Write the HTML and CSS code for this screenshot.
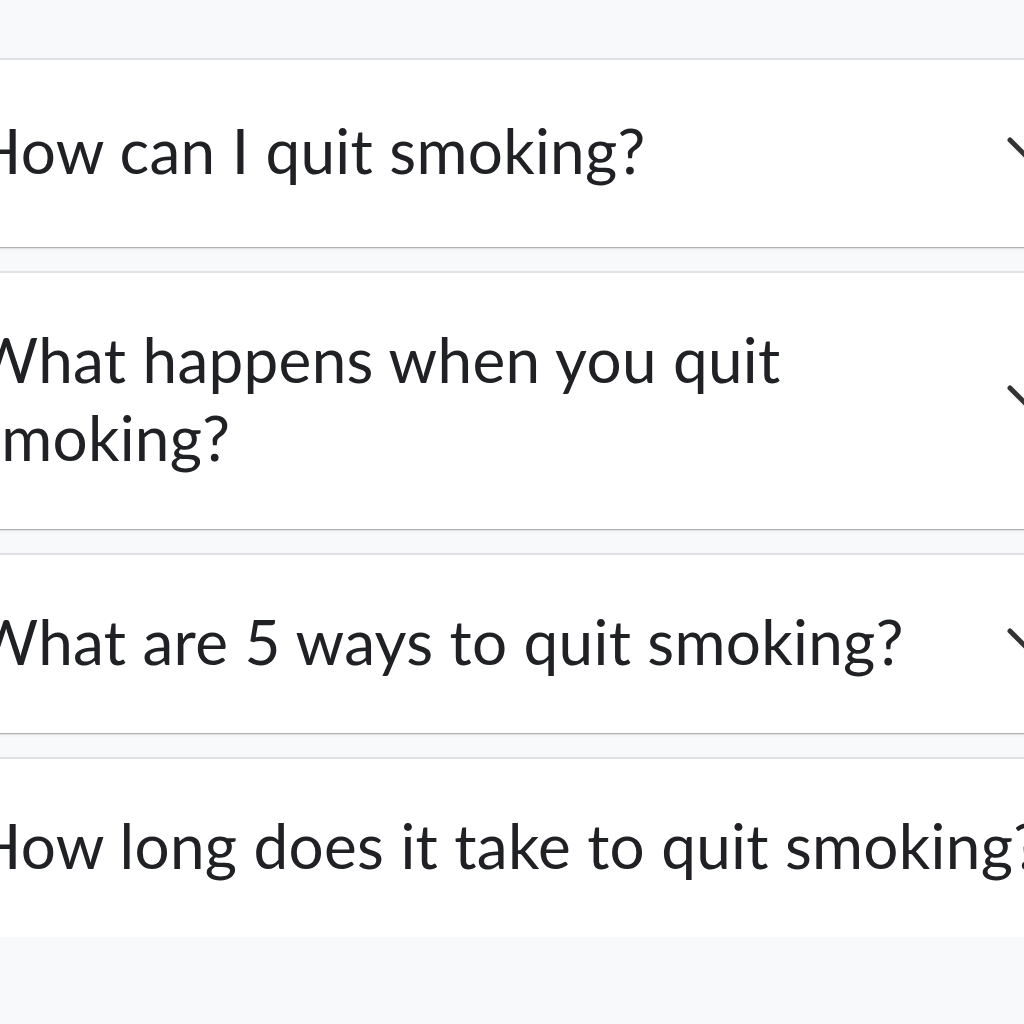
FILE: index.html
```html
<!DOCTYPE html>
<html lang="en">
<head>
  <meta charset="UTF-8" />
  <meta name="viewport" content="width=device-width, initial-scale=1.0"/>
  <title>FAQ</title>
  <link rel="stylesheet" href="styles.css">
</head>
<body>
  <div class="faq">
    <div class="item">
      <span class="question">How can I quit smoking?</span>
      <svg class="chevron" viewBox="0 0 50 50"><path d="M5 15 L25 35 L45 15" /></svg>
    </div>
    <div class="item">
      <span class="question">What happens when you quit<br>smoking?</span>
      <svg class="chevron" viewBox="0 0 50 50"><path d="M5 15 L25 35 L45 15" /></svg>
    </div>
    <div class="item">
      <span class="question">What are 5 ways to quit smoking?</span>
      <svg class="chevron" viewBox="0 0 50 50"><path d="M5 15 L25 35 L45 15" /></svg>
    </div>
    <div class="item">
      <span class="question">How long does it take to quit smoking?</span>
      <svg class="chevron" viewBox="0 0 50 50"><path d="M5 15 L25 35 L45 15" /></svg>
    </div>
  </div>
</body>
</html>
```

FILE: styles.css
```css
body {
  margin: 0;
  background: #f8f9fb;
  font-family: 'Lato', sans-serif;
  overflow: hidden;
}
.faq {
  display: flex;
  flex-direction: column;
  gap: 24px;
  padding-top: 58px;
  margin: 0 -60px;
}
.item {
  display: flex;
  justify-content: space-between;
  align-items: center;
  background: #ffffff;
  border-top: 2px solid #e0e1e4;
  box-shadow: 0 1px 1px rgba(60, 64, 67, 0.35), 0 2px 4px rgba(60, 64, 67, 0.08);
  padding: 47px 29px 53px 34px;
}
.item:first-child {
  padding-top: 51px;
  padding-bottom: 58px;
}
.question {
  font-size: 62px;
  line-height: 78px;
  letter-spacing: 0.3px;
  color: #202124;
  white-space: nowrap;
}
.chevron {
  width: 50px;
  height: 50px;
  flex-shrink: 0;
  margin-left: 20px;
}
.chevron path {
  fill: none;
  stroke: #333333;
  stroke-width: 5;
  stroke-linecap: round;
  stroke-linejoin: round;
}
```
